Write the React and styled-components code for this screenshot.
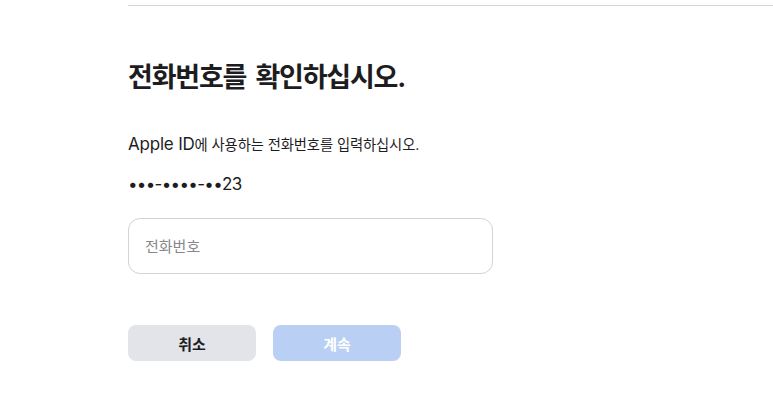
import styled, { createGlobalStyle } from 'styled-components';

const Global = createGlobalStyle`
  body {
    margin: 0;
    background: #fff;
    font-family: Inter, "Noto Sans CJK KR", sans-serif;
    color: #1d1d1f;
  }
`;

const Page = styled.div`
  padding-left: 128px;
  padding-top: 5px;
`;

const Rule = styled.hr`
  margin: 0;
  border: 0;
  border-top: 1px solid #d6d6d6;
`;

const Title = styled.h1`
  margin: 55px 0 0;
  font-size: 27px;
  line-height: 34px;
  font-weight: 700;
  letter-spacing: -1.2px;
  word-spacing: 4px;
  color: #1d1d1f;
`;

const Text = styled.p`
  margin: ${({ top }) => top}px 0 0;
  font-size: 17px;
  line-height: 24px;
  font-weight: 400;
  letter-spacing: ${({ tight }) => (tight ? '-0.7px' : '-0.2px')};
`;

// Hangul runs sit narrower than the Latin text on this page
const Ko = styled.span`
  font-size: 14.3px;
  letter-spacing: -0.1px;
`;

const Field = styled.div`
  margin-top: 22px;
  width: 365px;
  height: 56px;
  box-sizing: border-box;
  border: 1px solid #d2d2d7;
  border-radius: 12px;
  display: flex;
  align-items: center;
  padding: 0 16px;
`;

const Input = styled.input`
  border: 0;
  outline: none;
  width: 100%;
  font: inherit;
  font-size: 15px;
  color: #1d1d1f;
  background: transparent;
  padding: 0;

  &::placeholder {
    color: #86868b;
  }
`;

const Actions = styled.div`
  display: flex;
  gap: 17px;
  margin-top: 51px;
`;

const Button = styled.button`
  width: 128px;
  height: 36px;
  border: 0;
  border-radius: 8px;
  font-family: inherit;
  font-size: 15px;
  font-weight: 600;
  background: ${({ primary }) => (primary ? '#b9cff3' : '#e3e4e9')};
  color: ${({ primary }) => (primary ? '#ffffff' : '#1d1d1f')};
`;

export default function App() {
  return (
    <>
      <Global />
      <Page>
        <Rule />
        <Title>전화번호를 확인하십시오.</Title>
        <Text top={37}>
          Apple ID<Ko>에 사용하는 전화번호를 입력하십시오.</Ko>
        </Text>
        <Text top={15} tight>
          •••-••••-••23
        </Text>
        <Field>
          <Input placeholder="전화번호" />
        </Field>
        <Actions>
          <Button>취소</Button>
          <Button primary disabled>
            계속
          </Button>
        </Actions>
      </Page>
    </>
  );
}
